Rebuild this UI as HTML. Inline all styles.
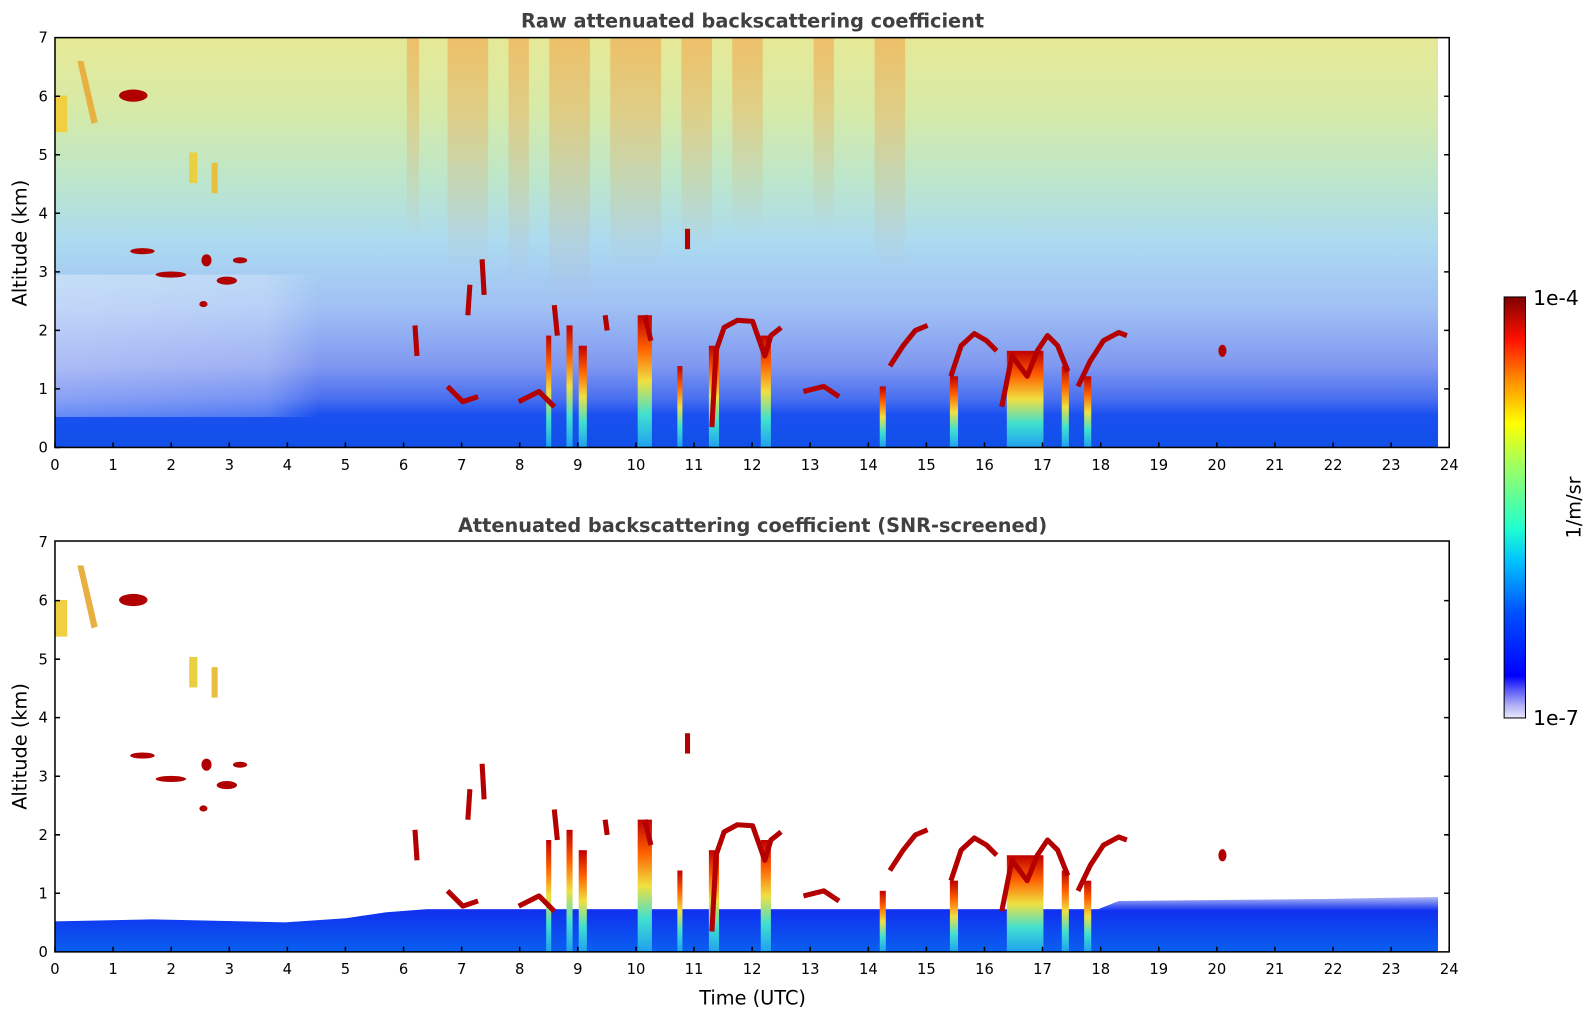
<!DOCTYPE html>
<html><head><meta charset="utf-8"><style>html,body{margin:0;padding:0;background:#fff;width:1595px;height:1020px;overflow:hidden}svg{display:block}text{font-family:"DejaVu Sans","Liberation Sans",sans-serif}</style></head><body>
<svg width="1595" height="1020" viewBox="0 0 1568.3 1003" xmlns="http://www.w3.org/2000/svg">
<defs>
<linearGradient id="bg" x1="0" y1="0" x2="0" y2="1">
<stop offset="0" stop-color="#e6e996"/><stop offset="0.18" stop-color="#d6eaa8"/><stop offset="0.35" stop-color="#bce6cc"/><stop offset="0.5" stop-color="#acdaf0"/><stop offset="0.66" stop-color="#a0c0f4"/><stop offset="0.8" stop-color="#8098f0"/><stop offset="0.88" stop-color="#4a70f0"/><stop offset="0.92" stop-color="#1a50f0"/><stop offset="1" stop-color="#1050e8"/></linearGradient>
<linearGradient id="strk" x1="0" y1="0" x2="0" y2="1"><stop offset="0" stop-color="#ff6000" stop-opacity="0.3"/><stop offset="1" stop-color="#ff6000" stop-opacity="0"/></linearGradient>
<linearGradient id="wh" x1="0" y1="0" x2="1" y2="0"><stop offset="0" stop-color="#fff" stop-opacity="0.35"/><stop offset="0.8" stop-color="#fff" stop-opacity="0.25"/><stop offset="1" stop-color="#fff" stop-opacity="0"/></linearGradient>
<linearGradient id="bar" x1="0" y1="0" x2="0" y2="1"><stop offset="0" stop-color="#c00000"/><stop offset="0.25" stop-color="#ff6000"/><stop offset="0.5" stop-color="#f0e040"/><stop offset="0.75" stop-color="#40e0d0"/><stop offset="1" stop-color="#20a0f0"/></linearGradient>
<linearGradient id="band" x1="0" y1="0" x2="0" y2="1"><stop offset="0" stop-color="#b0b8f6"/><stop offset="0.25" stop-color="#1030f0"/><stop offset="1" stop-color="#0a60f0"/></linearGradient>
<linearGradient id="cb" x1="0" y1="1" x2="0" y2="0"><stop offset="0" stop-color="#e8e8fa"/><stop offset="0.03" stop-color="#b0b0f8"/><stop offset="0.07" stop-color="#5050f8"/><stop offset="0.1" stop-color="#0000ff"/><stop offset="0.25" stop-color="#0050ff"/><stop offset="0.37" stop-color="#00c0ff"/><stop offset="0.45" stop-color="#20ffd0"/><stop offset="0.6" stop-color="#a0ff60"/><stop offset="0.7" stop-color="#ffff00"/><stop offset="0.8" stop-color="#ff9000"/><stop offset="0.9" stop-color="#ff1000"/><stop offset="1" stop-color="#800000"/></linearGradient>
<g id="feat">
<rect x="54" y="94" width="12" height="36" fill="#f0d040"/>
<polygon points="76,60 82,60 96,120 90,122" fill="#e8b040"/>
<rect x="186" y="150" width="8" height="30" fill="#e8d040"/>
<rect x="208" y="160" width="6" height="30" fill="#e8c040"/>
<g fill="#b00000">
<ellipse cx="131" cy="94" rx="14" ry="6"/><ellipse cx="140" cy="247" rx="12" ry="3"/><ellipse cx="168" cy="270" rx="15" ry="3"/><ellipse cx="203" cy="256" rx="5" ry="6"/><ellipse cx="223" cy="276" rx="10" ry="4"/><ellipse cx="236" cy="256" rx="7" ry="3"/><ellipse cx="200" cy="299" rx="4" ry="3"/><ellipse cx="1202" cy="345" rx="4" ry="6"/></g>
<g fill="url(#bar)">
<rect x="537" y="330" width="5" height="110"/><rect x="557" y="320" width="6" height="120"/><rect x="569" y="340" width="8" height="100"/><rect x="627" y="310" width="14" height="130"/><rect x="666" y="360" width="5" height="80"/><rect x="697" y="340" width="10" height="100"/><rect x="748" y="330" width="10" height="110"/><rect x="865" y="380" width="6" height="60"/><rect x="934" y="370" width="8" height="70"/><rect x="990" y="345" width="36" height="95"/><rect x="1044" y="360" width="7" height="80"/><rect x="1066" y="370" width="7" height="70"/></g>
<g fill="none" stroke="#b40000" stroke-width="5" stroke-linejoin="round">
<polyline points="700,420 704,345 712,322 725,315 740,316 752,350 758,330 768,322"/>
<polyline points="875,360 888,340 900,325 912,320"/>
<polyline points="935,370 945,340 958,328 970,335 980,345"/>
<polyline points="985,400 995,350 1010,370 1020,345 1030,330 1040,340 1050,365"/>
<polyline points="1060,380 1072,355 1085,335 1100,327 1108,330"/>
<polyline points="790,385 810,380 825,390"/>
<polyline points="510,395 530,385 545,400"/>
<polyline points="440,380 455,395 470,390"/>
<polyline points="476,290 474,255"/><polyline points="676,225 676,245"/>
<polyline points="408,320 410,350"/><polyline points="462,280 460,310"/><polyline points="545,300 548,330"/><polyline points="595,310 597,325"/><polyline points="634,310 640,335"/>
</g></g>
</defs>
<rect x="54" y="37" width="1360" height="403" fill="url(#bg)"/>
<rect x="54" y="270" width="260" height="140" fill="url(#wh)"/>
<g fill="url(#strk)">
<rect x="440" y="37" width="40" height="230"/><rect x="500" y="37" width="20" height="240"/><rect x="540" y="37" width="40" height="260"/><rect x="600" y="37" width="50" height="230"/><rect x="670" y="37" width="30" height="210"/><rect x="720" y="37" width="30" height="190"/><rect x="800" y="37" width="20" height="190"/><rect x="860" y="37" width="30" height="230"/><rect x="400" y="37" width="12" height="200"/></g>
<use href="#feat"/>
<path d="M54,936 L54,906 L150,904 L280,907 L340,903 L380,897 L420,894 L1080,894 L1100,886 L1300,884 L1414,882 L1414,936 Z" fill="url(#band)"/>
<g transform="translate(0,496)"><use href="#feat"/></g>
<g fill="none" stroke="#000" stroke-width="1.5">
<rect x="54" y="37" width="1371" height="403"/>
<rect x="54" y="532" width="1371" height="404"/>
<path id="tk" d="M54,440v-5M111.1,440v-5M168.3,440v-5M225.4,440v-5M282.5,440v-5M339.6,440v-5M396.8,440v-5M453.9,440v-5M511,440v-5M568.1,440v-5M625.3,440v-5M682.4,440v-5M739.5,440v-5M796.6,440v-5M853.8,440v-5M910.9,440v-5M968,440v-5M1025.1,440v-5M1082.3,440v-5M1139.4,440v-5M1196.5,440v-5M1253.6,440v-5M1310.8,440v-5M1367.9,440v-5M1425,440v-5
M54,440h5M54,382.4h5M54,324.9h5M54,267.3h5M54,209.7h5M54,152.2h5M54,94.6h5M1425,382.4h-5M1425,324.9h-5M1425,267.3h-5M1425,209.7h-5M1425,152.2h-5M1425,94.6h-5"/>
<path transform="translate(0,496)" d="M54,440v-5M111.1,440v-5M168.3,440v-5M225.4,440v-5M282.5,440v-5M339.6,440v-5M396.8,440v-5M453.9,440v-5M511,440v-5M568.1,440v-5M625.3,440v-5M682.4,440v-5M739.5,440v-5M796.6,440v-5M853.8,440v-5M910.9,440v-5M968,440v-5M1025.1,440v-5M1082.3,440v-5M1139.4,440v-5M1196.5,440v-5M1253.6,440v-5M1310.8,440v-5M1367.9,440v-5M1425,440v-5
M54,382.4h5M54,324.9h5M54,267.3h5M54,209.7h5M54,152.2h5M54,94.6h5M1425,382.4h-5M1425,324.9h-5M1425,267.3h-5M1425,209.7h-5M1425,152.2h-5M1425,94.6h-5"/>
</g>
<g font-size="14.5" fill="#000" text-anchor="middle">
<g id="xl"><text x="54" y="462">0</text><text x="111.1" y="462">1</text><text x="168.3" y="462">2</text><text x="225.4" y="462">3</text><text x="282.5" y="462">4</text><text x="339.6" y="462">5</text><text x="396.8" y="462">6</text><text x="453.9" y="462">7</text><text x="511" y="462">8</text><text x="568.1" y="462">9</text><text x="625.3" y="462">10</text><text x="682.4" y="462">11</text><text x="739.5" y="462">12</text><text x="796.6" y="462">13</text><text x="853.8" y="462">14</text><text x="910.9" y="462">15</text><text x="968" y="462">16</text><text x="1025.1" y="462">17</text><text x="1082.3" y="462">18</text><text x="1139.4" y="462">19</text><text x="1196.5" y="462">20</text><text x="1253.6" y="462">21</text><text x="1310.8" y="462">22</text><text x="1367.9" y="462">23</text><text x="1425" y="462">24</text></g>
<use href="#xl" transform="translate(0,496)"/>
</g>
<g font-size="14.5" fill="#000" text-anchor="end">
<g id="yl"><text x="47" y="445">0</text><text x="47" y="387.4">1</text><text x="47" y="329.9">2</text><text x="47" y="272.3">3</text><text x="47" y="214.7">4</text><text x="47" y="157.2">5</text><text x="47" y="99.6">6</text><text x="47" y="42">7</text></g>
<use href="#yl" transform="translate(0,496)"/>
</g>
<g font-size="19" fill="#404040" font-weight="bold" text-anchor="middle">
<text x="740" y="27">Raw attenuated backscattering coefficient</text>
<text x="740" y="523">Attenuated backscattering coefficient (SNR-screened)</text></g>
<g font-size="19" fill="#000" text-anchor="middle">
<text x="740" y="988">Time (UTC)</text>
<text transform="translate(26,239) rotate(-90)">Altitude (km)</text>
<text transform="translate(26,734) rotate(-90)">Altitude (km)</text>
<text transform="translate(1554,499) rotate(-90)">1/m/sr</text>
<text x="1530" y="300" text-anchor="middle" font-size="20">1e-4</text>
<text x="1530" y="713" text-anchor="middle" font-size="20">1e-7</text></g>
<rect x="1479" y="292" width="21" height="414" fill="url(#cb)" stroke="#000" stroke-width="1"/>
</svg>
</body></html>
